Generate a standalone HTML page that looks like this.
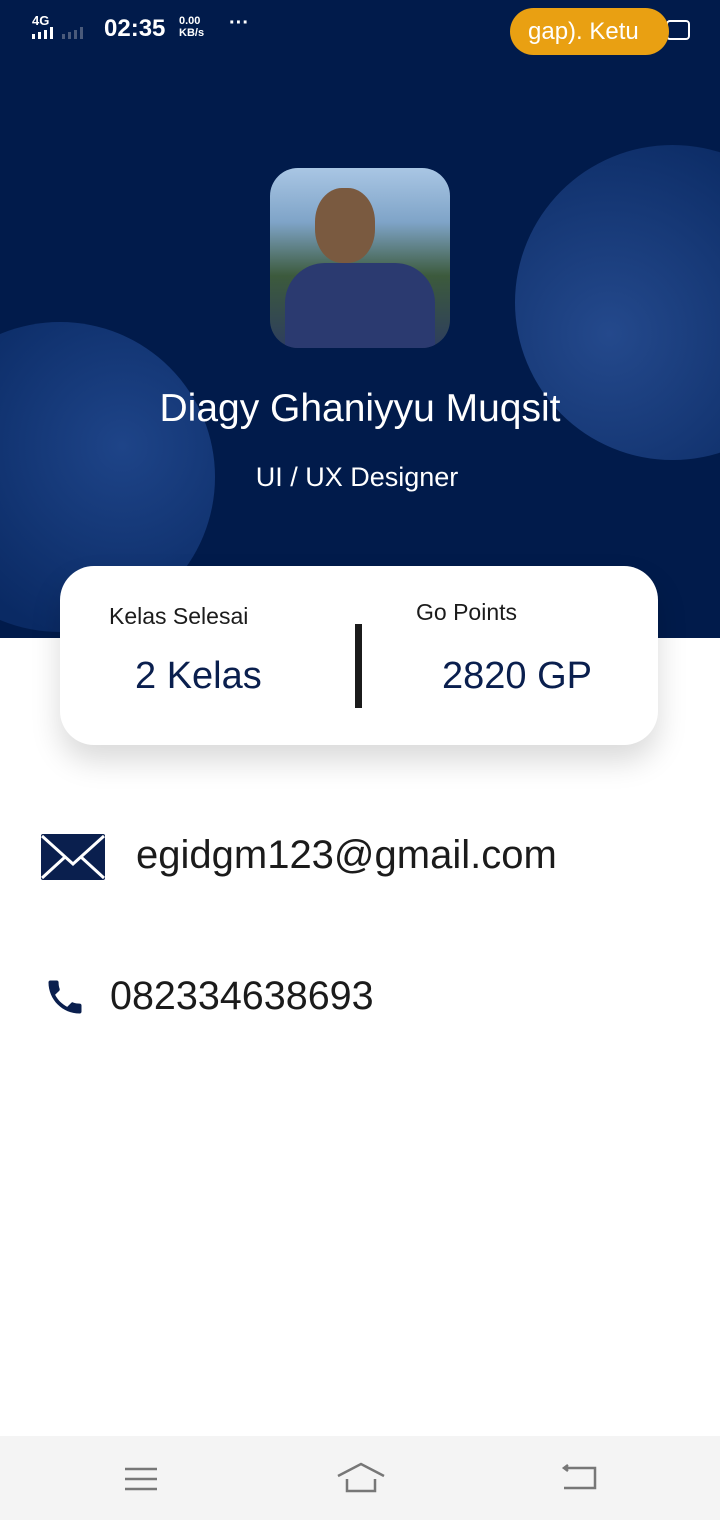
<!DOCTYPE html>
<html><head><meta charset="utf-8"><style>
body{margin:0;width:720px;height:1520px;position:relative;overflow:hidden;background:#fff;font-family:"Liberation Sans",Roboto,sans-serif}
.hdr{position:absolute;left:0;top:0;width:720px;height:638px;background:#011b4b;overflow:hidden}
.c1{position:absolute;left:-95px;top:322px;width:310px;height:310px;border-radius:50%;background:radial-gradient(circle at 70% 40%,#1e4488,#0a2a64 70%)}
.c2{position:absolute;left:515px;top:145px;width:315px;height:315px;border-radius:50%;background:radial-gradient(circle at 30% 60%,#24498c,#0c2c66 75%)}
.sb{position:absolute;color:#fff;font-weight:bold}
.av{position:absolute;left:270px;top:168px;width:180px;height:180px;border-radius:28px;overflow:hidden;background:linear-gradient(180deg,#a9c6e4 0%,#7fa4c8 30%,#3c5a3c 60%,#2d3d5e 100%)}
.card{position:absolute;left:60px;top:566px;width:598px;height:179px;background:#fff;border-radius:34px;box-shadow:0 16px 30px rgba(0,0,0,0.15)}
.nav{position:absolute;left:0;top:1436px;width:720px;height:84px;background:#f4f4f4}
</style></head><body>
<div class="hdr">
<div class="c1"></div><div class="c2"></div>
<div class="sb" style="left:32px;top:13px;font-size:13px">4G</div>
<div style="position:absolute;left:32px;top:27px;display:flex;gap:3px;align-items:flex-end">
<i style="width:3px;height:5px;background:#fff"></i><i style="width:3px;height:7px;background:#fff"></i><i style="width:3px;height:9px;background:#fff"></i><i style="width:3px;height:12px;background:#fff"></i><i style="width:3px;height:5px;background:#4a5a7a;margin-left:6px"></i><i style="width:3px;height:7px;background:#4a5a7a"></i><i style="width:3px;height:9px;background:#4a5a7a"></i><i style="width:3px;height:12px;background:#4a5a7a"></i></div>
<div class="sb" style="left:104px;top:15px;font-size:24px">02:35</div>
<div class="sb" style="left:179px;top:15px;font-size:11px;line-height:12px">0.00<br>KB/s</div>
<div class="sb" style="left:229px;top:12px;font-size:20px">···</div>
<div style="position:absolute;left:666px;top:20px;width:20px;height:16px;border:2px solid #fff;border-radius:4px"></div>
<div style="position:absolute;left:510px;top:8px;width:159px;height:47px;border-radius:24px;background:#e9a012;color:#fff;font-size:24px;line-height:47px;text-indent:18px">gap). Ketu</div>
<div class="av"><div style="position:absolute;left:45px;top:20px;width:60px;height:75px;border-radius:45%;background:#7a5a40"></div><div style="position:absolute;left:15px;top:95px;width:150px;height:90px;border-radius:40px 40px 0 0;background:#2b3a70"></div></div>
<div style="position:absolute;left:0;width:720px;top:387px;text-align:center;color:#fff;font-size:39px">Diagy Ghaniyyu Muqsit</div>
<div style="position:absolute;left:0;width:714px;top:462px;text-align:center;color:#fff;font-size:27px">UI / UX Designer</div>
</div>
<div class="card">
<div style="position:absolute;left:49px;top:37px;font-size:23px;color:#1b1b1b">Kelas Selesai</div>
<div style="position:absolute;left:75px;top:89px;font-size:38px;color:#0a1f4e">2 Kelas</div>
<div style="position:absolute;left:295px;top:58px;width:7px;height:84px;background:#1b1b1b"></div>
<div style="position:absolute;left:356px;top:33px;font-size:23px;color:#1b1b1b">Go Points</div>
<div style="position:absolute;left:382px;top:89px;font-size:38px;color:#0a1f4e">2820 GP</div>
</div>
<svg style="position:absolute;left:41px;top:834px" width="64" height="46" viewBox="0 0 64 46"><rect width="64" height="46" rx="2" fill="#0a1f4e"/><path d="M1 2 L32 30 L63 2 M1 44 L24 23 M63 44 L40 23" stroke="#fff" stroke-width="3" fill="none"/></svg>
<div style="position:absolute;left:136px;top:833px;font-size:40px;color:#1b1b1b">egidgm123@gmail.com</div>
<svg style="position:absolute;left:43px;top:975px" width="44" height="44" viewBox="0 0 24 24"><path fill="#0a1f4e" d="M6.6 10.8c1.4 2.8 3.8 5.1 6.6 6.6l2.2-2.2c.3-.3.7-.4 1-.2 1.1.4 2.3.6 3.6.6.6 0 1 .4 1 1V20c0 .6-.4 1-1 1C10.6 21 3 13.4 3 4c0-.6.4-1 1-1h3.5c.6 0 1 .4 1 1 0 1.3.2 2.5.6 3.6.1.3 0 .7-.2 1L6.6 10.8z"/></svg>
<div style="position:absolute;left:110px;top:974px;font-size:39.5px;color:#1b1b1b">082334638693</div>
<div class="nav">
<svg style="position:absolute;left:123px;top:30px" width="36" height="26"><path d="M2 3H34M2 13H34M2 23H34" stroke="#777" stroke-width="2.5"/></svg>
<svg style="position:absolute;left:336px;top:26px" width="50" height="32"><path d="M2 14L25 2L48 14M11 17V29H39V17" stroke="#777" stroke-width="2.5" fill="none"/></svg>
<svg style="position:absolute;left:560px;top:28px" width="38" height="28"><path d="M8 4H35V24H4M8 4L4 4M8 1L4 4L8 7" stroke="#777" stroke-width="2.5" fill="none"/></svg>
</div>
</body></html>
